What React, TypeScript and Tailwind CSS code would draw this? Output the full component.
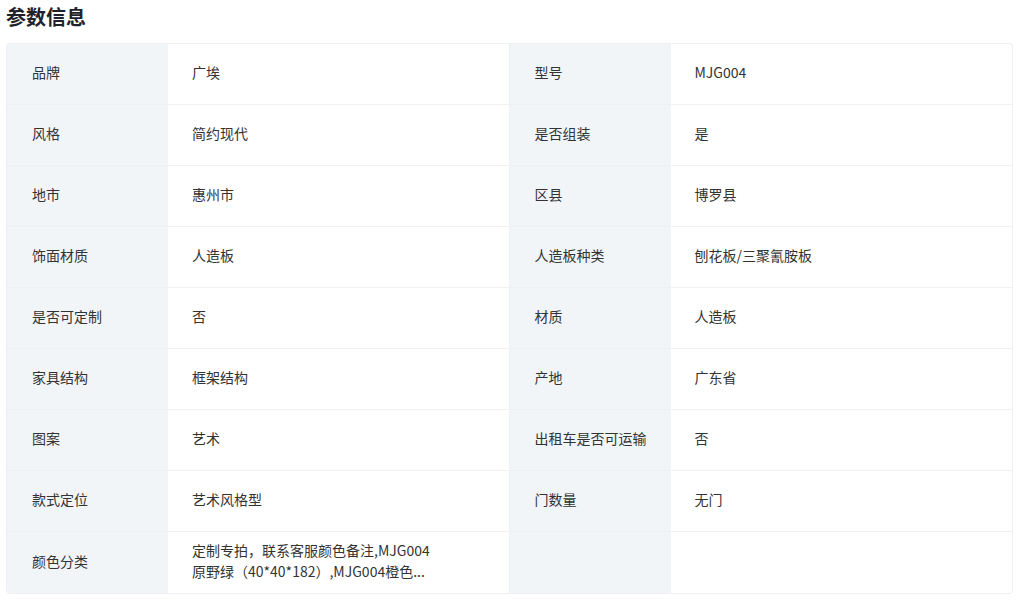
const rows: [string, string, string, string][] = [
  ["品牌", "广埃", "型号", "MJG004"],
  ["风格", "简约现代", "是否组装", "是"],
  ["地市", "惠州市", "区县", "博罗县"],
  ["饰面材质", "人造板", "人造板种类", "刨花板/三聚氰胺板"],
  ["是否可定制", "否", "材质", "人造板"],
  ["家具结构", "框架结构", "产地", "广东省"],
  ["图案", "艺术", "出租车是否可运输", "否"],
  ["款式定位", "艺术风格型", "门数量", "无门"],
  ["颜色分类", "定制专拍，联系客服颜色备注,MJG004原野绿（40*40*182）,MJG004橙色...", "", ""],
];

const Cell = ({ label, value, last }: { label: string; value: string; last: boolean }) => (
  <div className={`flex h-[61px] ${last ? "" : "border-b border-[#eef0f3]"}`}>
    <div className="w-[161px] shrink-0 bg-[#f2f5f8] flex items-center pl-[25px] pb-[3px]">{label}</div>
    <div className="flex-1 flex items-center pl-[24px] pr-4 pb-[3px]">
      <span className="w-[246px] leading-[21px]">{value}</span>
    </div>
  </div>
);

export default function App() {
  return (
    <div
      className="w-[1020px] h-[601px] bg-white px-[6px] text-[14px] text-[#333]"
      style={{ fontFamily: '"Microsoft YaHei", "Noto Sans CJK SC", sans-serif' }}
    >
      <h2 className="pt-[3px] h-[43px] text-[20px] leading-[28px] font-bold text-[#1f2329]">参数信息</h2>
      <div className="grid grid-cols-2 w-[1007px]">
        <div className="border border-[#eef0f3] rounded-l-[4px] overflow-hidden">
          {rows.map((r, i) => (
            <Cell key={i} label={r[0]} value={r[1]} last={i === rows.length - 1} />
          ))}
        </div>
        <div className="border border-l-0 border-[#eef0f3] rounded-r-[4px] overflow-hidden">
          {rows.map((r, i) => (
            <Cell key={i} label={r[2]} value={r[3]} last={i === rows.length - 1} />
          ))}
        </div>
      </div>
    </div>
  );
}
